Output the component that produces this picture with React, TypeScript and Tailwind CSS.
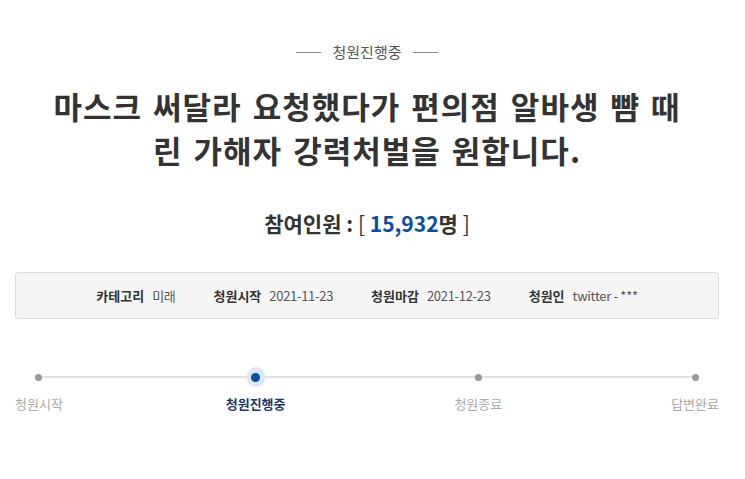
import React from 'react';

const FONT = '"Noto Sans CJK KR", "Noto Sans", sans-serif';

const info = [
  { label: '카테고리', value: '미래' },
  { label: '청원시작', value: '2021-11-23' },
  { label: '청원마감', value: '2021-12-23' },
  { label: '청원인', value: 'twitter - ***' },
];

const steps = [
  { label: '청원시작', active: false },
  { label: '청원진행중', active: true },
  { label: '청원종료', active: false },
  { label: '답변완료', active: false },
];

export default function App() {
  return (
    <div className="min-h-screen bg-white pl-[15px] pr-[26px] pt-[42px]" style={{ fontFamily: FONT }}>
      {/* status label */}
      <div className="flex items-center justify-center gap-[11px] text-[15px] leading-[20px] text-[#555]">
        <span className="h-px w-[25px] bg-[#888]"></span>
        <span>청원진행중</span>
        <span className="h-px w-[25px] bg-[#888]"></span>
      </div>

      {/* title */}
      <h1 className="mx-auto mt-[22px] max-w-[645px] text-center text-[31px] font-bold leading-[44px] tracking-[1px] [word-spacing:3px] text-[#333]">
        마스크 써달라 요청했다가 편의점 알바생 뺨 때린 가해자 강력처벌을 원합니다.
      </h1>

      {/* participants */}
      <div className="mt-[37px] text-center text-[21px] font-bold leading-[28px] text-[#333]">
        참여인원 : <span className="font-normal">[</span>{' '}
        <span className="text-[#0c4da2]">15,932</span>명{' '}
        <span className="font-normal">]</span>
      </div>

      {/* info box */}
      <div className="mt-[35px] flex h-[47px] items-center justify-center gap-[38px] rounded-[3px] border border-[#dcdcdc] bg-[#f5f5f5] text-[13px] text-[#555]">
        {info.map((item) => (
          <div key={item.label} className="flex items-center gap-[8px]">
            <span className="font-bold text-[#333]">{item.label}</span>
            <span className="tracking-[-0.3px]">{item.value}</span>
          </div>
        ))}
      </div>

      {/* progress */}
      <div className="relative mt-[49px] flex justify-between">
        <div className="absolute left-[22px] right-[23px] top-[8px] h-[2px] bg-[#e2e2e2]"></div>
        {steps.map((step, i) => (
          <div key={step.label} className={`relative flex flex-col items-center ${i === 1 ? '-ml-[6px]' : ''}`}>
            <div className="flex h-[18px] w-[18px] items-center justify-center">
              {step.active ? (
                <span className="flex h-[20px] w-[20px] items-center justify-center rounded-full bg-[#dbe8fb]">
                  <span className="h-[9px] w-[9px] rounded-full bg-[#0b4ea2]"></span>
                </span>
              ) : (
                <span className="h-[7px] w-[7px] rounded-full bg-[#999]"></span>
              )}
            </div>
            <span
              className={`mt-[9px] text-[13px] leading-[18px] ${
                step.active ? 'font-bold text-[#1c3a6e]' : 'text-[#aaa]'
              }`}
            >
              {step.label}
            </span>
          </div>
        ))}
      </div>
    </div>
  );
}
